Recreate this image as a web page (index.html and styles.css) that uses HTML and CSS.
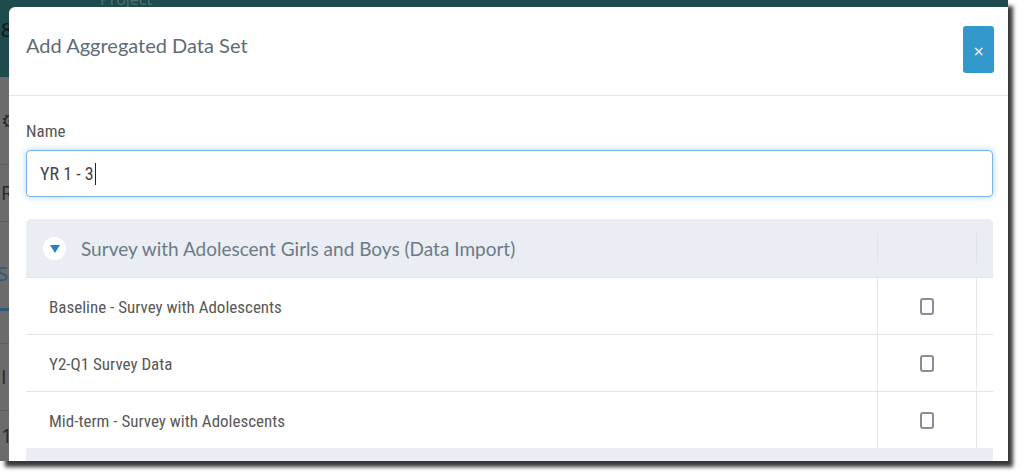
FILE: index.html
```html
<!DOCTYPE html>
<html lang="en">
<head>
<meta charset="utf-8">
<title>Add Aggregated Data Set</title>
<link rel="stylesheet" href="styles.css">
</head>
<body>
<div class="shot">
  <div class="page">
    <div class="topbar"><span class="proj">Project</span><span class="frag frag-top">8</span></div>
    <div class="prow prow-a"><span class="frag">&#9881;</span></div>
    <div class="prow prow-b"><span class="frag">R</span></div>
    <div class="prow prow-c"><span class="frag frag-blue">SI</span></div>
    <div class="prow prow-d"></div>
    <div class="prow prow-e"><span class="frag">I</span></div>
    <div class="prow prow-f"><span class="frag">1</span></div>
  </div>

  <div class="modal">
    <div class="modal-header">
      <h4 class="modal-title">Add Aggregated Data Set</h4>
      <button class="close-btn" type="button">&times;</button>
    </div>
    <div class="modal-body">
      <label class="field-label">Name</label>
      <div class="text-input">YR 1 - 3<span class="caret"></span></div>

      <div class="panel">
        <div class="grp-head">
          <div class="cell-main">
            <span class="toggle"><span class="tri"></span></span>
            <span class="grp-title">Survey with Adolescent Girls and Boys (Data Import)</span>
          </div>
          <div class="cell-check"><span class="vline"></span></div>
          <div class="cell-end"><span class="vline"></span></div>
        </div>
        <div class="data-row">
          <div class="cell-main">Baseline - Survey with Adolescents</div>
          <div class="cell-check"><span class="checkbox"></span></div>
          <div class="cell-end"></div>
        </div>
        <div class="data-row">
          <div class="cell-main">Y2-Q1 Survey Data</div>
          <div class="cell-check"><span class="checkbox"></span></div>
          <div class="cell-end"></div>
        </div>
        <div class="data-row">
          <div class="cell-main">Mid-term - Survey with Adolescents</div>
          <div class="cell-check"><span class="checkbox"></span></div>
          <div class="cell-end"></div>
        </div>
        <div class="grp-next"></div>
      </div>
    </div>
  </div>
</div>
</body>
</html>
```

FILE: styles.css
```css
* { box-sizing: border-box; }

html, body {
  margin: 0;
  padding: 0;
  background: #ffffff;
}

body {
  width: 1024px;
  height: 475px;
  overflow: hidden;
  font-family: Lato, "Open Sans", sans-serif;
}

.shot {
  position: relative;
  width: 1008px;
  height: 461px;
  overflow: hidden;
  background: #6c6c6c;
  box-shadow: 5px 6px 4px rgba(0, 0, 0, 0.78);
}

/* background page (dimmed) */
.page {
  display: flex;
  flex-direction: column;
  height: 100%;
}

.topbar {
  height: 77px;
  background: #1e4c4e;
  position: relative;
  display: flex;
}

.proj {
  position: absolute;
  left: 100px;
  top: -12px;
  font-size: 16px;
  color: #4a7372;
  font-family: "Open Sans", sans-serif;
}

.frag {
  display: block;
  font-family: "Open Sans", sans-serif;
  font-size: 20px;
  line-height: 1;
  color: #2a2a2a;
  margin-left: 1px;
}

.frag-top {
  margin-top: 20px;
  color: #111;
}

.frag-blue {
  color: #2d5a78;
  margin-left: -3px;
  margin-top: 18px;
}

.prow {
  border-bottom: 1px solid #5c5c5c;
  display: flex;
  align-items: center;
  background: #6b6b6b;
}

.prow-a { height: 88px; }
.prow-b { height: 57px; }
.prow-c { height: 89px; border-bottom: 3px solid #2b5b77; }
.prow-d { height: 33px; }
.prow-e { height: 67px; }
.prow-f { flex: 1; border-bottom: 0; }

/* modal */
.modal {
  position: absolute;
  left: 9px;
  top: 7px;
  width: 999px;
  height: 470px;
  background: #ffffff;
  border-top-left-radius: 6px;
}

.modal-header {
  height: 89px;
  padding: 19px 14px 0 17px;
  border-bottom: 1px solid #e3e6ea;
  display: flex;
  justify-content: space-between;
  align-items: flex-start;
}

.modal-title {
  margin: 5px 0 0 0;
  font-family: Lato, "Open Sans", sans-serif;
  font-weight: 400;
  font-size: 20px;
  line-height: 28px;
  color: #5f6b75;
}

.close-btn {
  width: 31px;
  height: 47px;
  border: 0;
  border-radius: 3px;
  background: #3399cc;
  color: #ffffff;
  font-family: "DejaVu Sans", sans-serif;
  font-size: 14px;
  line-height: 1;
  padding: 2px 0 0 0;
}

.modal-body {
  padding: 25px 15px 0 17px;
  display: flex;
  flex-direction: column;
}

.field-label {
  font-family: "Liberation Sans Narrow", "Roboto Condensed", "Open Sans", sans-serif;
  font-size: 17px;
  line-height: 20px;
  color: #555555;
  margin-bottom: 9px;
}

.text-input {
  height: 47px;
  border: 1px solid #7ab4e6;
  border-radius: 4px;
  box-shadow: 0 0 6px rgba(102, 175, 233, 0.55), inset 0 1px 1px rgba(0, 0, 0, 0.05);
  padding-left: 13px;
  display: flex;
  align-items: center;
  font-family: "Liberation Sans Narrow", "Roboto Condensed", "Open Sans", sans-serif;
  font-size: 18px;
  color: #444444;
}

.caret {
  display: inline-block;
  width: 1px;
  height: 22px;
  background: #222;
  margin-left: 1px;
}

.panel {
  margin-top: 22px;
  border-radius: 5px 5px 0 0;
  overflow: hidden;
}

.grp-head,
.data-row {
  display: grid;
  grid-template-columns: 1fr 99px 17px;
}

.grp-head {
  height: 58px;
  background: #eaedf3;
}

.grp-head .cell-main {
  display: flex;
  align-items: center;
  padding-left: 17px;
}

.toggle {
  width: 23px;
  height: 23px;
  border-radius: 50%;
  background: #ffffff;
  display: flex;
  align-items: center;
  justify-content: center;
  margin-right: 15px;
}

.tri {
  width: 0;
  height: 0;
  border-left: 5.5px solid transparent;
  border-right: 5.5px solid transparent;
  border-top: 8px solid #2680c2;
  margin-top: 2px;
}

.grp-title {
  font-family: Lato, "Open Sans", sans-serif;
  font-size: 19px;
  color: #6d7a86;
}

.grp-head .cell-check,
.grp-head .cell-end {
  display: flex;
  align-items: center;
}

.vline {
  width: 1px;
  height: 30px;
  background: #dde1e8;
}

.data-row {
  height: 57px;
  border-top: 1px solid #e2e4e7;
  background: #ffffff;
}

.data-row .cell-main {
  display: flex;
  align-items: center;
  padding-left: 23px;
  padding-top: 2px;
  font-family: "Liberation Sans Narrow", "Roboto Condensed", "Open Sans", sans-serif;
  font-size: 17px;
  color: #585858;
}

.data-row .cell-check {
  border-left: 1px solid #e6e8eb;
  display: flex;
  align-items: center;
  justify-content: center;
}

.data-row .cell-end {
  border-left: 1px solid #e6e8eb;
}

.checkbox {
  width: 14px;
  height: 17px;
  border: 2px solid #8b8b9a;
  border-radius: 3px;
  background: #ffffff;
}

.grp-next {
  height: 20px;
  background: #eaedf3;
}
```
